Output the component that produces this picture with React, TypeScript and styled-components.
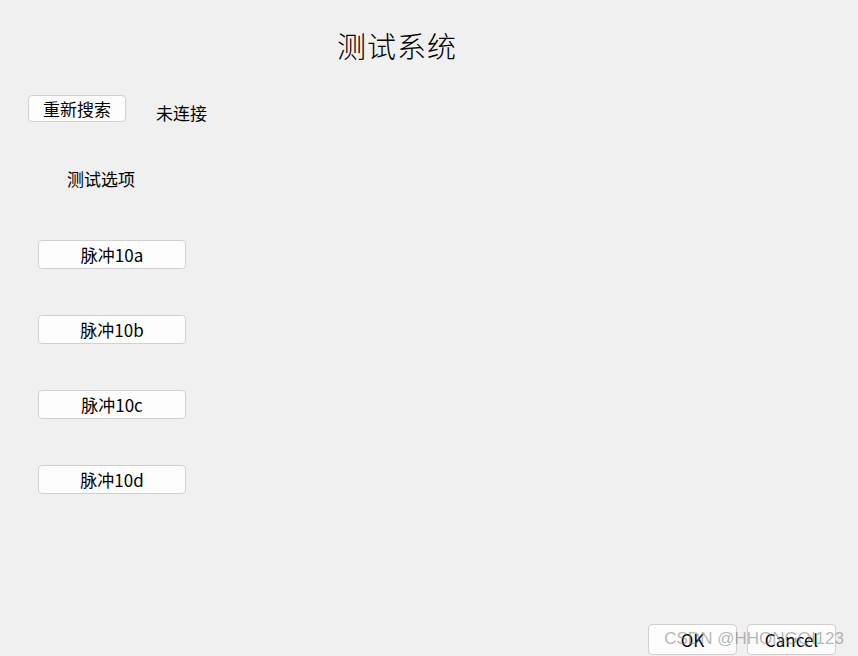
import React from 'react';
import styled, { createGlobalStyle } from 'styled-components';

const GlobalStyle = createGlobalStyle`
  html, body {
    margin: 0;
    padding: 0;
    background: #f0f0f0;
  }
  body {
    font-family: "Noto Sans CJK SC", "Noto Sans", sans-serif;
    color: #000;
  }
`;

const pulses = ['脉冲10a', '脉冲10b', '脉冲10c', '脉冲10d'];

export default function App() {
  return (
    <>
      <GlobalStyle />
      <Window>
        <Title>测试系统</Title>
        <Toolbar>
          <Button $width={98} $height={27}>重新搜索</Button>
          <Status>未连接</Status>
        </Toolbar>
        <SectionLabel>测试选项</SectionLabel>
        <PulseList>
          {pulses.map((p) => (
            <Button key={p} $width={148} $height={29}>
              {p}
            </Button>
          ))}
        </PulseList>
        <Footer>
          <Button $width={89} $height={31}>OK</Button>
          <Button $width={89} $height={31}>Cancel</Button>
          <Watermark>CSDN @HHONGQI123</Watermark>
        </Footer>
      </Window>
    </>
  );
}

const Window = styled.div`
  width: 858px;
  height: 656px;
  display: flex;
  flex-direction: column;
  overflow: hidden;
  box-sizing: border-box;
`;

const Title = styled.h1`
  margin: 0;
  padding: 25px 0 0 337px;
  font-size: 29px;
  font-weight: 300;
  line-height: 40px;
  letter-spacing: 1px;
`;

const Toolbar = styled.div`
  display: flex;
  align-items: flex-start;
  gap: 30px;
  padding: 30px 0 0 28px;
`;

const Button = styled.button<{ $width: number; $height: number }>`
  width: ${(p) => p.$width}px;
  height: ${(p) => p.$height}px;
  box-sizing: border-box;
  padding: 0;
  background: #fdfdfd;
  border: 1px solid #d0d0d0;
  border-radius: 4px;
  font-family: "Noto Sans CJK SC", "Noto Sans", sans-serif;
  font-size: 17px;
  line-height: 1;
  color: #000;
  display: flex;
  align-items: center;
  justify-content: center;
`;

const Status = styled.span`
  font-size: 17px;
  line-height: 20px;
  margin-top: 8px;
`;

const SectionLabel = styled.div`
  font-size: 17px;
  line-height: 20px;
  padding: 46px 0 0 67px;
`;

const PulseList = styled.div`
  display: flex;
  flex-direction: column;
  gap: 46px;
  padding: 51px 0 0 38px;
`;

const Footer = styled.div`
  margin-top: auto;
  position: relative;
  display: flex;
  justify-content: flex-end;
  gap: 10px;
  padding-right: 22px;
  margin-bottom: 1px;
`;

const Watermark = styled.span`
  position: absolute;
  right: 14px;
  top: 5px;
  font-family: "Liberation Sans", Arial, sans-serif;
  font-size: 17px;
  color: rgba(120, 120, 120, 0.55);
  pointer-events: none;
`;
